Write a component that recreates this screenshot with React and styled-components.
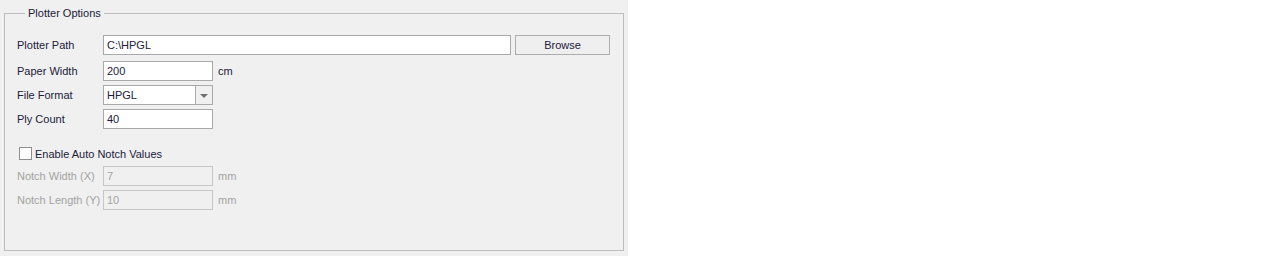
import React from 'react';
import styled, {createGlobalStyle} from 'styled-components';

const GlobalStyle = createGlobalStyle`
  html, body {
    margin: 0;
    padding: 0;
    background: #ffffff;
  }
  body {
    font-family: "Liberation Sans", Arial, sans-serif;
    font-size: 11px;
    color: #20203a;
  }
`;

const Panel = styled.div`
  width: 628px;
  height: 256px;
  box-sizing: border-box;
  background: #f0f0f0;
  padding: 6px 4px 0 4px;
`;

const Group = styled.fieldset`
  margin: 0;
  height: 245px;
  box-sizing: border-box;
  border: 1px solid #bcbcbc;
  padding: 15px 12px 0 12px;
  display: flex;
  flex-direction: column;
`;

const Legend = styled.legend`
  margin-left: 8px;
  padding: 0 3px;
  line-height: 14px;
  height: 14px;
  color: #20203a;
`;

const Row = styled.div`
  display: flex;
  align-items: center;
  height: 20px;
  margin-top: ${p => p.$top || 0}px;
`;

const Label = styled.div`
  width: 86px;
  flex: none;
  color: ${p => (p.$disabled ? '#a3a3a3' : '#20203a')};
  white-space: nowrap;
`;

const Input = styled.div`
  box-sizing: border-box;
  height: 20px;
  width: ${p => p.$width}px;
  border: 1px solid ${p => (p.$disabled ? '#c6c6c6' : '#a9a9a9')};
  background: ${p => (p.$disabled ? '#f0f0f0' : '#ffffff')};
  color: ${p => (p.$disabled ? '#a3a3a3' : '#20203a')};
  padding-left: 3px;
  line-height: 18px;
  display: flex;
  align-items: center;
`;

const Unit = styled.span`
  margin-left: 5px;
  color: ${p => (p.$disabled ? '#a3a3a3' : '#20203a')};
`;

const Button = styled.div`
  box-sizing: border-box;
  margin-left: 4px;
  width: 95px;
  height: 20px;
  border: 1px solid #adadad;
  background: #efefef;
  display: flex;
  align-items: center;
  justify-content: center;
  color: #20203a;
`;

const Combo = styled.div`
  box-sizing: border-box;
  width: 110px;
  height: 20px;
  border: 1px solid #a9a9a9;
  background: #ffffff;
  display: flex;
`;

const ComboText = styled.div`
  flex: 1;
  padding-left: 3px;
  line-height: 18px;
`;

const ComboButton = styled.div`
  width: 16px;
  border-left: 1px solid #a9a9a9;
  background: #f0f0f0;
  display: flex;
  align-items: center;
  justify-content: center;
`;

const Arrow = styled.div`
  width: 0;
  height: 0;
  border-left: 4px solid transparent;
  border-right: 4px solid transparent;
  border-top: 4px solid #707070;
  margin-top: 1px;
`;

const CheckRow = styled.div`
  display: flex;
  align-items: center;
  margin-top: 18px;
  margin-left: 2px;
  height: 13px;
`;

const Box = styled.div`
  box-sizing: border-box;
  width: 13px;
  height: 13px;
  border: 1px solid #8f8f8f;
  background: #ffffff;
  margin-right: 3px;
`;

function Field({label, value, width = 110, unit, disabled, top}) {
  return (
    <Row $top={top}>
      <Label $disabled={disabled}>{label}</Label>
      <Input $width={width} $disabled={disabled}>{value}</Input>
      {unit ? <Unit $disabled={disabled}>{unit}</Unit> : null}
    </Row>
  );
}

export default function App() {
  return (
    <>
      <GlobalStyle />
      <Panel>
        <Group>
          <Legend>Plotter Options</Legend>
          <Row>
            <Label>Plotter Path</Label>
            <Input $width={408}>C:\HPGL</Input>
            <Button>Browse</Button>
          </Row>
          <Field label="Paper Width" value="200" unit="cm" top={6} />
          <Row $top={4}>
            <Label>File Format</Label>
            <Combo>
              <ComboText>HPGL</ComboText>
              <ComboButton>
                <Arrow />
              </ComboButton>
            </Combo>
          </Row>
          <Field label="Ply Count" value="40" top={4} />
          <CheckRow>
            <Box />
            Enable Auto Notch Values
          </CheckRow>
          <Field label="Notch Width (X)" value="7" unit="mm" disabled top={6} />
          <Field label="Notch Length (Y)" value="10" unit="mm" disabled top={4} />
        </Group>
      </Panel>
    </>
  );
}
